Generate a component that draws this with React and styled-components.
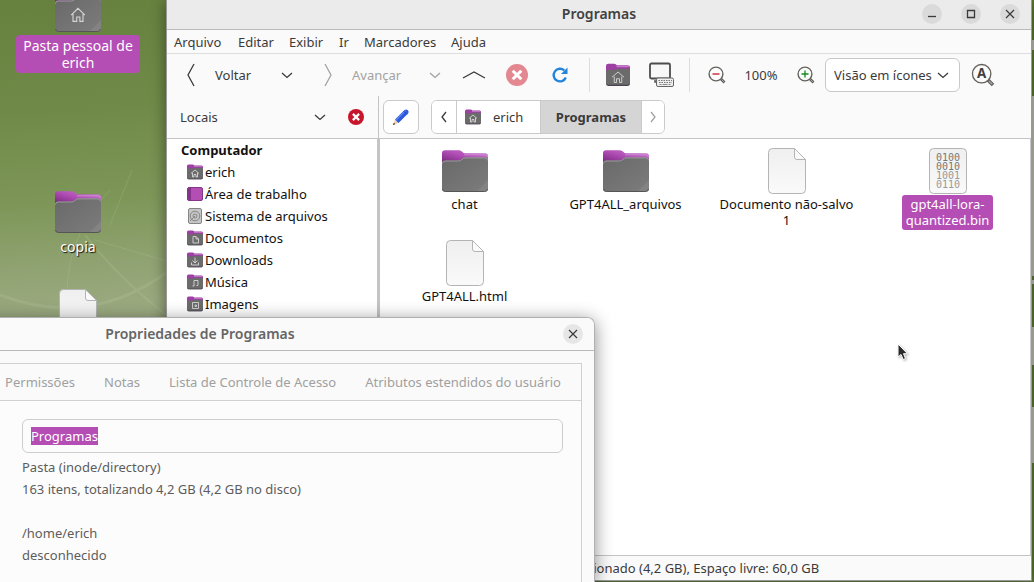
import React from "react";
import styled, { createGlobalStyle } from "styled-components";

const GlobalStyle = createGlobalStyle`
* { box-sizing: border-box; }
body {
  margin: 0;
  overflow: hidden;
  font-family: "Noto Sans", "Open Sans", sans-serif;
  font-size: 13px;
  color: #3a3a3a;
}
button, input, select {
  font: inherit;
  color: inherit;
  margin: 0;
}
button {
  padding: 0;
  border: 0;
  background: none;
}
svg { display: block; flex: none; }
`

const Desktop = styled.main`
position: relative;
height: 100vh;
overflow: hidden;
background: linear-gradient(176deg, #66813e 0%, #708b49 18%, #7e9759 32%, #91a373 42%, #a5b18d 55%, #6a8345 75%, #6a8345 100%);
`
const Wallpaper = styled.svg`
position: absolute;
inset: 0;
width: 100%;
height: 100%;
`
const DesktopItem = styled.div`
position: absolute;
left: 0;
top: ${p => p.$top}px;
width: 156px;
display: flex;
flex-direction: column;
align-items: center;
`
const DesktopLabel = styled.span`
padding: 2px 4px;
max-width: 124px;
border-radius: 4px;
font-size: 14px;
line-height: 17px;
text-align: center;
color: white;
background: ${p => p.$selected ? "#b44db4" : "transparent"};
text-shadow: ${p => p.$selected ? "none" : "1px 1px 1px #111"};
`

const FileWindow = styled.section`
position: absolute;
left: 166px;
right: 2px;
top: 0;
bottom: 1px;
display: flex;
flex-direction: column;
background: #fafafa;
border: solid #999;
border-width: 0 1px 1px;
box-shadow: 0 2px 14px rgba(0, 0, 0, 0.45);
`
const TitleBar = styled.header`
display: grid;
grid-template-columns: 1fr auto 1fr;
align-items: center;
height: ${p => p.$active ? 30 : 33}px;
padding: ${p => p.$active ? "0 11px 2px" : "0 11px"};
border-bottom: 1px solid #bababa;
background: ${p => p.$active ? "#ebebeb" : "#fafafa"};
`
const Title = styled.h1`
grid-column: 2;
margin: 0;
font-size: 14px;
line-height: 20px;
font-weight: 600;
color: ${p => p.$active ? "#404040" : "#666"};
`
const WindowButtons = styled.div`
display: flex;
justify-content: flex-end;
gap: 19px;
`
const RoundButton = styled.button`
display: grid;
place-items: center;
width: 20px;
height: 20px;
border-radius: 50%;
background: ${p => p.$active ? "#dadada" : "#e6e6e6"};
`
const MenuBar = styled.nav`
display: grid;
grid-template-columns: 64px 51px 50px 25px 87px 50px;
align-items: center;
height: 24px;
padding-left: 7px;
border-bottom: 1px solid #dedede;
`
const MenuButton = styled.button`
text-align: left;
`
const Toolbar = styled.div`
display: flex;
align-items: center;
height: 42px;
`
const NavButton = styled.button`
display: flex;
align-items: center;
gap: 16px;
width: ${p => p.$width}px;
padding-left: 16px;
color: ${p => p.disabled ? "#a2a2a2" : "#3a3a3a"};
`
const ToolButton = styled.button`
display: grid;
place-items: center;
width: ${p => p.$width || 42}px;
height: 34px;
color: ${p => p.disabled ? "#a2a2a2" : "#3a3a3a"};
`
const Separator = styled.span`
width: 1px;
height: 34px;
margin: 0 7px;
background: #dcdcdc;
`
const ZoomLevel = styled.output`
width: 50px;
text-align: center;
`
const ViewSelect = styled.label`
display: grid;
align-items: center;
width: 135px;
height: 34px;
border: 1px solid #c8c8c8;
border-radius: 6px;
background: white;

select {
  grid-area: 1 / 1;
  width: 100%;
  height: 100%;
  padding: 0 22px 0 8px;
  border: 0;
  appearance: none;
  background: none;
}
svg {
  grid-area: 1 / 1;
  justify-self: end;
  margin-right: 10px;
  pointer-events: none;
}
`

const Panes = styled.div`
flex: 1;
min-height: 0;
display: flex;
`
const SidePane = styled.aside`
display: flex;
flex-direction: column;
width: 213px;
`
const SideHeader = styled.div`
display: flex;
align-items: center;
height: 42px;
margin-right: 1px;
padding-left: 13px;
border-right: 1px solid #c4c4c4;
`
const PlacesButton = styled.button`
flex: 1;
display: flex;
align-items: center;
justify-content: space-between;
`
const CloseSide = styled.button`
margin: 0 14px 0 22px;
`
const Places = styled.ul`
flex: 1;
margin: 0;
padding: 0 0 0 14px;
list-style: none;
border-top: 1px solid #c4c4c4;
border-right: 3px solid #c4c4c4;
background: white;
color: #111;
`
const PlacesTitle = styled.li`
height: 22px;
line-height: 22px;
font-weight: 700;
`
const Place = styled.li`
display: flex;
align-items: center;
gap: 2px;
height: 22px;
padding-left: 6px;
`
const MainPane = styled.div`
flex: 1;
min-width: 0;
display: flex;
flex-direction: column;
`
const PathRow = styled.div`
display: flex;
align-items: center;
gap: 12px;
height: 42px;
padding-left: 3px;
`
const EditButton = styled.button`
display: grid;
place-items: center;
width: 36px;
height: 34px;
border: 1px solid #cacaca;
border-radius: 6px;
background: white;
`
const Crumbs = styled.div`
display: flex;
height: 34px;
overflow: hidden;
border: 1px solid #cacaca;
border-radius: 6px;
background: white;
`
const Crumb = styled.button`
display: flex;
align-items: center;
justify-content: ${p => p.$folder ? "flex-start" : "center"};
gap: 12px;
width: ${p => p.$width}px;
padding-left: ${p => p.$folder ? 8 : 0}px;
border-left: 1px solid #cacaca;
font-weight: ${p => p.$current ? 700 : 400};
background: ${p => p.$current ? "#d5d5d5" : "white"};
color: ${p => p.disabled ? "#a2a2a2" : "#3a3a3a"};

&:first-child { border-left: 0; }
`
const IconView = styled.div`
flex: 1;
display: grid;
grid-template-columns: repeat(auto-fill, 161px);
grid-auto-rows: 83px;
row-gap: 9px;
padding: 8px 0 0 4px;
border-top: 1px solid #c4c4c4;
border-right: 1px solid #c8c8cc;
background: white;
`
const File = styled.div`
display: flex;
flex-direction: column;
align-items: center;
`
const FileLabel = styled.span`
max-width: 145px;
padding: 1px 4px 2px;
border-radius: 3px;
line-height: 16px;
text-align: center;
white-space: pre-line;
color: ${p => p.$selected ? "white" : "#111"};
background: ${p => p.$selected ? "#b44db4" : "transparent"};
`
const StatusBar = styled.footer`
height: 25px;
padding-left: 14px;
line-height: 24px;
border-top: 1px solid #c4c4c4;
text-align: center;
white-space: nowrap;
`

const Dialog = styled.section`
position: absolute;
left: -195px;
right: 439px;
top: 317px;
bottom: 0;
display: flex;
flex-direction: column;
border: solid #b0b0b0;
border-width: 1px 1px 0;
border-radius: 8px 8px 0 0;
overflow: hidden;
background: #fafafa;
color: #5c5c5c;
`
const DialogShadow = styled.div`
position: absolute;
left: -195px;
right: 439px;
top: 317px;
bottom: 0;
border-radius: 8px 8px 0 0;
box-shadow: 0 3px 18px rgba(0, 0, 0, 0.45);
`
const Notebook = styled.div`
flex: 1;
margin: 12px 12px 0;
border: solid #d0d0d0;
border-width: 1px 1px 0;
background: #fcfcfc;
`
const Tabs = styled.div`
display: flex;
justify-content: flex-end;
gap: 29px;
height: 37px;
padding-right: 20px;
border-bottom: 1px solid #d0d0d0;
background: #fafafa;
`
const Tab = styled.button`
color: #a0a0a0;
`
const Properties = styled.div`
display: flex;
flex-direction: column;
padding: 18px 18px 0 203px;
`
const NameInput = styled.input`
width: 100%;
height: 34px;
margin-bottom: 3px;
padding: 0 8px;
border: 1px solid #cdcdcd;
border-radius: 6px;
outline: none;
background: #fcfcfc;
line-height: 16px;

&::selection { background: #b44db4; color: white; }
`
const Property = styled.div`
height: 22px;
line-height: 22px;
`
const Pointer = styled.svg`
position: absolute;
left: 896px;
top: 342px;
filter: drop-shadow(1px 1px 1px rgba(0, 0, 0, 0.3));
`

const line = { fill: "none", stroke: "currentColor" }

const Chevron = ({ d, w = 12, h = 12, sw = 1.3 }) => (
  <svg width={w} height={h} viewBox={`0 0 ${w} ${h}`} {...line} strokeWidth={sw}>
    <path d={d} />
  </svg>
)
const Down = () => <Chevron d="M1 4 L6 8.500 L11 4" />

const Gradients = () => (
  <defs>
    <linearGradient id="tab" x1="0" y1="1" x2="1" y2="0">
      <stop offset="0" stopColor="#6c2273" />
      <stop offset="0.5" stopColor="#b04cb4" />
      <stop offset="1" stopColor="#c87fd0" />
    </linearGradient>
    <linearGradient id="front" x1="0" y1="0" x2="1" y2="1">
      <stop offset="0" stopColor="#696969" />
      <stop offset="1" stopColor="#7c7c7c" />
    </linearGradient>
    <linearGradient id="paper" x1="0" y1="0" x2="0" y2="1">
      <stop offset="0" stopColor="#efefef" />
      <stop offset="1" stopColor="#fafafa" />
    </linearGradient>
  </defs>
)

const HOUSE = "M0.500 6.500 L6 1 L11.500 6.500 M2 5.500 V11.500 H5 V8 H7.500 V11.500 H10 V5.500"

const Folder = ({ home }) => (
  <svg width="48" height="48" viewBox="0 0 48 48">
    <path d="M1 17 V6.500 Q1 3.300 4 3.300 H18 Q20 3.300 21.500 5 Q22.500 6.200 24 6.200 H44 Q47 6.200 47 9.500 V17 Z" fill="url(#tab)" />
    <path d="M23 7.800 H44 Q46 7.800 46.500 10" fill="none" stroke="#d9a0de" strokeWidth="1" opacity="0.7" />
    <path d="M1 16.500 Q1 13.600 4 13.600 H17.500 Q19 13.600 20.500 12 Q22 10.400 24 10.400 H44 Q47 10.400 47 13.400 V41.500 Q47 44.800 44 44.800 H4 Q1 44.800 1 41.500 Z" fill="url(#front)" />
    <path d="M1.500 16.500 Q1.500 14 4 14 H17.500 Q19.500 14 21 12.400 Q22.300 10.900 24 10.900 H44 Q46.500 10.900 46.500 13.400" fill="none" stroke="#999" strokeWidth="1" />
    <path d="M36 44 L47 33 V41.500 Q47 44 44 44 Z" fill="#888" opacity="0.6" />
    <path d="M1.500 42 Q2 44.500 4.500 44.500 H43.500 Q46 44.500 46.500 42" fill="none" stroke="#555" strokeWidth="1" />
    {home && <path d={HOUSE} transform="translate(16.500 20) scale(1.250)" fill="none" stroke="#d5d5d5" strokeWidth="0.900" />}
  </svg>
)

const Sheet = ({ bits }) => (
  <svg width="48" height="48" viewBox="0 0 48 48">
    <path
      d={bits
        ? "M9.500 1.500 H38.500 Q42.500 1.500 42.500 5.500 V42.500 Q42.500 46.500 38.500 46.500 H9.500 Q5.500 46.500 5.500 42.500 V5.500 Q5.500 1.500 9.500 1.500 Z"
        : "M9.500 1.500 H31.500 L42.500 12.500 V42.500 Q42.500 46.500 38.500 46.500 H9.500 Q5.500 46.500 5.500 42.500 V5.500 Q5.500 1.500 9.500 1.500 Z"}
      fill="url(#paper)" stroke="#b4b4b4"
    />
    {!bits && <path d="M31.500 1.500 V10 Q31.500 12.500 34 12.500 H42.500 Z" fill="#fafafa" stroke="#b4b4b4" />}
    {bits && bits.map((row, i) => (
      <text key={i} x="24" y={14 + i * 9} textAnchor="middle" fontFamily="DejaVu Sans Mono, monospace" fontSize="10" fill={i < 2 ? "#777" : "#999"}>{row}</text>
    ))}
  </svg>
)

const glyphs = {
  home: "M4 9.500 L8 6 L12 9.500 M5.500 9 V13 H7 V10.500 H9 V13 H10.500 V9",
  doc: "M6 6.500 H9 L11.500 9 V13 H6 Z M9 6.500 V9 H11.500",
  down: "M8 5.500 V10.500 M5.500 8.500 L8 11 L10.500 8.500 M4.500 10.500 V13 H11.500 V10.500",
  music: "M7 12 V6.500 H11 V11 M5.500 12 H7 M9.500 11.500 H11",
  image: "M5.500 6.500 H11.500 V12.500 H5.500 Z M8 9 H9.500 V10.500 H8 Z",
}

const MiniFolder = ({ glyph, size = 16 }) => (
  <svg width={size} height={size} viewBox="0 0 16 16">
    <path d="M0 6 V2 Q0 0.500 1.500 0.500 H5.500 Q6.500 0.500 7.300 1.500 H14.500 Q16 1.500 16 3 V7 H0 Z" fill="#9d3fa3" />
    <path d="M7 2.300 H15.200" stroke="#c77ccc" strokeWidth="1" />
    <path d="M0 5.500 Q0 4.500 1.200 4.500 H6 L7.500 3.800 H14.800 Q16 3.800 16 5 V13.800 Q16 15.200 14.500 15.200 H1.500 Q0 15.200 0 13.800 Z" fill="#6b6b6b" />
    <path d="M0.500 14 Q0.700 14.900 1.700 14.900 H14.300 Q15.300 14.900 15.500 14" fill="none" stroke="#4c4350" strokeWidth="0.700" />
    <path d={glyphs[glyph]} fill="none" stroke="#d8d8d8" strokeWidth={size > 16 ? 0.6 : 0.9} />
  </svg>
)
const DeskIcon = () => (
  <svg width="16" height="16" viewBox="0 0 16 16">
    <rect x="0.500" y="1.500" width="15" height="13" rx="1.500" fill="#b44db4" stroke="#823788" />
    <path d="M1 2 H4 V14 H1 Z" fill="#84348b" />
  </svg>
)
const DiskIcon = () => (
  <svg width="16" height="16" viewBox="0 0 16 16" fill="none" stroke="#858585">
    <rect x="1.500" y="0.500" width="13" height="15" rx="1.500" fill="#c6c6c6" />
    <circle cx="8" cy="8" r="4.800" />
    <circle cx="8" cy="8" r="2" />
    <path d="M8 8 L3 13" />
  </svg>
)

const Cross = ({ color = "#3a3a3a" }) => (
  <svg width="10" height="10" viewBox="0 0 10 10" stroke={color} strokeWidth="1.200">
    <path d="M1 1 L9 9 M9 1 L1 9" />
  </svg>
)
const RedCross = ({ size, color }) => (
  <svg width={size} height={size} viewBox="0 0 22 22">
    <circle cx="11" cy="11" r="11" fill={color} />
    <path d="M6.700 6.700 L15.300 15.300 M15.300 6.700 L6.700 15.300" stroke="white" strokeWidth="3" />
  </svg>
)
const Lens = ({ children, size = 18 }) => (
  <svg width={size} height={size} viewBox="0 0 18 18" fill="none">
    <path d="M12.500 12.500 L16.500 16.500" stroke="#5f5b55" strokeWidth="2.600" />
    <path d="M13.500 13.500 L16 16" stroke="#aaa" strokeWidth="1" />
    <circle cx="8" cy="8" r="6.900" fill="#fbfbfb" stroke="#65625c" strokeWidth={size > 18 ? 1 : 1.4} />
    {children}
  </svg>
)

const Reload = () => (
  <svg width="18" height="18" viewBox="0 0 18 18">
    <path d="M14.800 11.500 A6.300 6.300 0 1 1 13.300 4.500" fill="none" stroke="#2384d8" strokeWidth="2.400" />
    <path d="M16.500 1.500 V8 H10 Z" fill="#2384d8" />
  </svg>
)
const Computer = () => (
  <svg width="26" height="26" viewBox="0 0 26 26">
    <rect x="2" y="1.500" width="20" height="15" rx="1.500" fill="#f8f8f8" stroke="#4d4d4d" strokeWidth="1.800" />
    <path d="M7 18 V20 H9" fill="none" stroke="#555" strokeWidth="1.500" />
    <rect x="8.500" y="16" width="17" height="8.500" rx="1.500" fill="#eee" stroke="#666" />
    <path d="M10.500 18.500 H24 M11 20.500 H24" stroke="#777" strokeDasharray="1.500 1" />
    <path d="M11.500 22.500 H22.500" stroke="#888" strokeDasharray="2 1 5 1" />
  </svg>
)
const Pencil = () => (
  <svg width="18" height="18" viewBox="0 0 18 18">
    <path d="M1 17 L3 11.500 L6.500 15 Z" fill="#efcfae" />
    <path d="M1 17 L1.800 14.700 L3.300 16.200 Z" fill="#333" />
    <path d="M3 11.500 L12.500 2 Q14 0.800 15.500 2 L16.200 2.800 Q17.300 4 16 5.500 L6.500 15 Z" fill="#2d5be0" />
    <path d="M4 12 L13.500 2.500" stroke="#5d86f2" strokeWidth="1.200" />
    <path d="M11.500 3 L15 6.500" stroke="#1c3fae" strokeWidth="0.800" />
  </svg>
)

const menus = ["Arquivo", "Editar", "Exibir", "Ir", "Marcadores", "Ajuda"]
const places = [
  { name: "erich", icon: <MiniFolder glyph="home" /> },
  { name: "Área de trabalho", icon: <DeskIcon /> },
  { name: "Sistema de arquivos", icon: <DiskIcon /> },
  { name: "Documentos", icon: <MiniFolder glyph="doc" /> },
  { name: "Downloads", icon: <MiniFolder glyph="down" /> },
  { name: "Música", icon: <MiniFolder glyph="music" /> },
  { name: "Imagens", icon: <MiniFolder glyph="image" /> },
]
const files = [
  { name: "chat", icon: <Folder /> },
  { name: "GPT4ALL_arquivos", icon: <Folder /> },
  { name: "Documento não-salvo\n1", icon: <Sheet /> },
  { name: "gpt4all-lora-\nquantized.bin", icon: <Sheet bits={["0100", "0010", "1001", "0110"]} />, selected: true },
  { name: "GPT4ALL.html", icon: <Sheet /> },
]
const tabs = ["Permissões", "Notas", "Lista de Controle de Acesso", "Atributos estendidos do usuário"]

class PropertiesDialog extends React.Component {
  state = { nome: "Programas" }
  campo = React.createRef()

  componentDidMount() {
    this.campo.current.focus()
    this.campo.current.select()
  }
  render() {
    return (
      <>
        <DialogShadow />
        <Dialog>
          <TitleBar>
            <Title>Propriedades de Programas</Title>
            <WindowButtons>
              <RoundButton aria-label="Fechar"><Cross /></RoundButton>
            </WindowButtons>
          </TitleBar>
          <Notebook>
            <Tabs>
              {tabs.map(t => <Tab key={t}>{t}</Tab>)}
            </Tabs>
            <Properties>
              <NameInput
                ref={this.campo}
                aria-label="Nome"
                value={this.state.nome}
                onChange={e => this.setState({ nome: e.target.value })}
              />
              <Property>Pasta (inode/directory)</Property>
              <Property>163 itens, totalizando 4,2 GB (4,2 GB no disco)</Property>
              <Property />
              <Property>/home/erich</Property>
              <Property>desconhecido</Property>
            </Properties>
          </Notebook>
        </Dialog>
      </>
    )
  }
}

export default function App() {
  return (
    <Desktop>
      <GlobalStyle />
      <Wallpaper viewBox="0 0 1034 582" preserveAspectRatio="none">
        <Gradients />
        <g fill="none" stroke="#c5d0ac" opacity="0.18">
          <path d="M68 318 Q60 240 110 190" />
          <path d="M85 235 Q120 280 170 318" strokeWidth="2" />
          <path d="M0 295 Q90 330 170 270" strokeWidth="3" />
          <path d="M95 240 L170 262" />
          <path d="M110 225 L132 170" />
        </g>
        <path d="M1031 0 H1034 V40 H1031 Z M1031 50 H1034 V96 H1031 Z M1031 276 H1034 V280 H1031 Z M1031 284 H1034 V327 H1031 Z M1031 365 H1034 V407 H1031 Z M1031 463 H1034 V582 H1031 Z" fill="#5d7a36" />
        <path d="M1031 40 H1034 V50 H1031 Z M1031 96 H1034 V276 H1031 Z M1031 280 H1034 V284 H1031 Z M1031 327 H1034 V365 H1031 Z M1031 407 H1034 V463 H1031 Z" fill="#bfc2b5" />
      </Wallpaper>

      <DesktopItem $top={-13}>
        <Folder home />
        <DesktopLabel $selected>Pasta pessoal de erich</DesktopLabel>
      </DesktopItem>
      <DesktopItem $top={188}>
        <Folder />
        <DesktopLabel>copia</DesktopLabel>
      </DesktopItem>
      <DesktopItem $top={288}>
        <Sheet />
      </DesktopItem>

      <FileWindow>
        <TitleBar $active>
          <Title $active>Programas</Title>
          <WindowButtons>
            <RoundButton $active aria-label="Minimizar"><Chevron d="M2 8.500 H10" /></RoundButton>
            <RoundButton $active aria-label="Maximizar"><Chevron d="M2.500 2.500 H9.500 V9.500 H2.500 Z" /></RoundButton>
            <RoundButton $active aria-label="Fechar"><Cross /></RoundButton>
          </WindowButtons>
        </TitleBar>
        <MenuBar>
          {menus.map(m => <MenuButton key={m}>{m}</MenuButton>)}
        </MenuBar>
        <Toolbar>
          <NavButton $width={103}><Chevron w={16} h={24} d="M11 1 L5 12 L11 23" />Voltar</NavButton>
          <ToolButton $width={34} aria-label="Histórico anterior"><Down /></ToolButton>
          <NavButton $width={114} disabled><Chevron w={16} h={24} d="M5 1 L11 12 L5 23" />Avançar</NavButton>
          <ToolButton $width={34} disabled aria-label="Histórico seguinte"><Down /></ToolButton>
          <ToolButton $width={44} aria-label="Acima"><Chevron w={24} h={12} d="M1 9 L12 3 L23 9" /></ToolButton>
          <ToolButton aria-label="Parar"><RedCross size={22} color="#e38790" /></ToolButton>
          <ToolButton $width={44} aria-label="Recarregar"><Reload /></ToolButton>
          <Separator />
          <ToolButton aria-label="Pasta pessoal"><MiniFolder glyph="home" size={24} /></ToolButton>
          <ToolButton $width={43} aria-label="Computador"><Computer /></ToolButton>
          <Separator />
          <ToolButton $width={39} aria-label="Reduzir"><Lens><path d="M4.500 8 H11.500" stroke="#c4162b" strokeWidth="1.300" /></Lens></ToolButton>
          <ZoomLevel>100%</ZoomLevel>
          <ToolButton $width={39} aria-label="Ampliar"><Lens><path d="M4.500 8 H11.500 M8 4.500 V11.500" stroke="#138a1c" strokeWidth="1.300" /></Lens></ToolButton>
          <ViewSelect>
            <select aria-label="Modo de visão">
              <option>Visão em ícones</option>
            </select>
            <Down />
          </ViewSelect>
          <ToolButton $width={46} aria-label="Pesquisar">
            <Lens size={24}>
              <text x="8" y="11.500" textAnchor="middle" fontSize="10" fontWeight="700" fill="#3f3f3f">A</text>
            </Lens>
          </ToolButton>
        </Toolbar>
        <Panes>
          <SidePane>
            <SideHeader>
              <PlacesButton>Locais<Down /></PlacesButton>
              <CloseSide aria-label="Fechar painel"><RedCross size={16} color="#c7162b" /></CloseSide>
            </SideHeader>
            <Places>
              <PlacesTitle>Computador</PlacesTitle>
              {places.map(p => <Place key={p.name}>{p.icon}{p.name}</Place>)}
            </Places>
          </SidePane>
          <MainPane>
            <PathRow>
              <EditButton aria-label="Editar local"><Pencil /></EditButton>
              <Crumbs>
                <Crumb $width={24} aria-label="Anterior"><Chevron d="M8 1 L4 6 L8 11" /></Crumb>
                <Crumb $width={84} $folder><MiniFolder glyph="home" />erich</Crumb>
                <Crumb $width={101} $current>Programas</Crumb>
                <Crumb $width={23} disabled aria-label="Seguinte"><Chevron d="M4 1 L8 6 L4 11" /></Crumb>
              </Crumbs>
            </PathRow>
            <IconView>
              {files.map(f => (
                <File key={f.name}>
                  {f.icon}
                  <FileLabel $selected={f.selected}>{f.name}</FileLabel>
                </File>
              ))}
            </IconView>
          </MainPane>
        </Panes>
        <StatusBar>“gpt4all-lora-quantized.bin” selecionado (4,2 GB), Espaço livre: 60,0 GB</StatusBar>
      </FileWindow>

      <PropertiesDialog />

      <Pointer width="14" height="20" viewBox="0 0 14 20">
        <path d="M2 2 V15 L5 12.500 L7.200 17.500 L9.500 16.500 L7.500 11.700 H11.500 Z" fill="#2b2b2b" stroke="white" strokeWidth="1" />
      </Pointer>
    </Desktop>
  )
}
